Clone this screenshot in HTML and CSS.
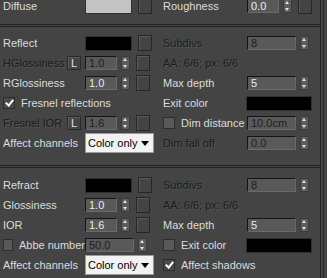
FILE: index.html
```html
<!DOCTYPE html>
<html lang="en">
<head>
    <meta charset="UTF-8">
    <title>VRayMtl - Basic parameters</title>
    <link rel="stylesheet" href="styles.css">
</head>
<body>
    <div class="frame">
        <div class="panel">
            <section class="sec sec-diffuse">
                <div class="row">
                    <span class="lbl">Diffuse</span>
                    <span class="ctl"><span class="swatch grey"></span><span class="map"></span></span>
                    <span class="lbl">Roughness</span>
                    <span class="ctl"><span class="field">0.0</span><span class="spin"></span><span class="map"></span></span>
                </div>
            </section>

            <div class="sep"></div>

            <section class="sec sec-reflect">
                <div class="row">
                    <span class="lbl">Reflect</span>
                    <span class="ctl"><span class="swatch"></span><span class="map"></span></span>
                    <span class="lbl dis">Subdivs</span>
                    <span class="ctl"><span class="field wide off">8</span><span class="spin"></span></span>
                </div>
                <div class="row">
                    <span class="lbl lock"><span class="dis">HGlossiness</span><span class="lbtn">L</span></span>
                    <span class="ctl"><span class="field off">1.0</span><span class="spin"></span><span class="map"></span></span>
                    <span class="lbl dis span2">AA: 6/6; px: 6/6</span>
                </div>
                <div class="row">
                    <span class="lbl">RGlossiness</span>
                    <span class="ctl"><span class="field">1.0</span><span class="spin"></span><span class="map"></span></span>
                    <span class="lbl">Max depth</span>
                    <span class="ctl"><span class="field wide">5</span><span class="spin"></span></span>
                </div>
                <div class="row">
                    <span class="lbl span2"><span class="check on"></span>Fresnel reflections</span>
                    <span class="lbl">Exit color</span>
                    <span class="ctl"><span class="swatch long"></span></span>
                </div>
                <div class="row">
                    <span class="lbl lock"><span class="dis">Fresnel IOR</span><span class="lbtn">L</span></span>
                    <span class="ctl"><span class="field off">1.6</span><span class="spin"></span><span class="map"></span></span>
                    <span class="lbl"><span class="check"></span>Dim distance</span>
                    <span class="ctl"><span class="field wide off">10.0cm</span><span class="spin"></span></span>
                </div>
                <div class="row">
                    <span class="lbl">Affect channels</span>
                    <span class="ctl"><span class="drop">Color only</span></span>
                    <span class="lbl dis">Dim fall off</span>
                    <span class="ctl"><span class="field wide off">0.0</span><span class="spin"></span></span>
                </div>
            </section>

            <div class="sep"></div>

            <section class="sec sec-refract">
                <div class="row">
                    <span class="lbl">Refract</span>
                    <span class="ctl"><span class="swatch"></span><span class="map"></span></span>
                    <span class="lbl dis">Subdivs</span>
                    <span class="ctl"><span class="field wide off">8</span><span class="spin"></span></span>
                </div>
                <div class="row">
                    <span class="lbl">Glossiness</span>
                    <span class="ctl"><span class="field">1.0</span><span class="spin"></span><span class="map"></span></span>
                    <span class="lbl dis span2">AA: 6/6; px: 6/6</span>
                </div>
                <div class="row">
                    <span class="lbl">IOR</span>
                    <span class="ctl"><span class="field">1.6</span><span class="spin"></span><span class="map"></span></span>
                    <span class="lbl">Max depth</span>
                    <span class="ctl"><span class="field wide">5</span><span class="spin"></span></span>
                </div>
                <div class="row">
                    <span class="lbl"><span class="check"></span>Abbe number</span>
                    <span class="ctl"><span class="field wide off">50.0</span><span class="spin"></span></span>
                    <span class="lbl"><span class="check"></span>Exit color</span>
                    <span class="ctl"><span class="swatch long"></span></span>
                </div>
                <div class="row">
                    <span class="lbl">Affect channels</span>
                    <span class="ctl"><span class="drop">Color only</span></span>
                    <span class="lbl span2"><span class="check on"></span>Affect shadows</span>
                </div>
            </section>
        </div>
        <div class="edge"></div>
    </div>
</body>
</html>
```

FILE: styles.css
```css
body {
    margin: 0;
    background: #444444;
    color: #dcdcdc;
    font-family: "Liberation Sans", Arial, sans-serif;
    font-size: 11px;
    overflow: hidden;
}

.frame {
    display: flex;
    height: 278px;
}

.panel {
    width: 320px;
    border-right: 1px solid #232323;
}

.edge {
    width: 1px;
    margin-left: 2px;
    background: #2a2a2a;
}

.sec-diffuse {
    margin-top: -4px;
    padding-bottom: 8px;
}

.sec-reflect {
    padding-top: 6px;
    padding-bottom: 12px;
}

.sec-refract {
    padding-top: 7px;
}

.sep {
    height: 3px;
    box-sizing: border-box;
    border-top: 1px solid #232323;
    border-bottom: 1px solid #232323;
}

.row {
    display: grid;
    grid-template-columns: 85px 75px 87px 1fr;
    height: 20px;
    align-items: center;
}

.lbl {
    display: flex;
    align-items: center;
    padding-left: 3px;
    white-space: nowrap;
}

.span2 {
    grid-column: span 2;
}

.lock {
    justify-content: space-between;
    padding-right: 4px;
}

.dis {
    color: #1c1c1c;
    text-shadow: 1px 1px 0 #555555;
}

.ctl {
    display: flex;
    align-items: center;
}

.lbtn {
    flex-shrink: 0;
    width: 12px;
    height: 12px;
    border: 1px solid #2a2a2a;
    box-shadow: inset 1px 1px 0 #5c5c5c;
    text-align: center;
    line-height: 12px;
    color: #e4e4e4;
    text-shadow: none;
}

.field {
    width: 32px;
    height: 14px;
    box-sizing: border-box;
    padding-left: 3px;
    line-height: 12px;
    background: #595959;
    border: 1px solid;
    border-color: #141414 #6a6a6a #6a6a6a #141414;
    color: #ececec;
}

.field.wide {
    width: 49px;
}

.field.off {
    color: #1e1e1e;
}

.spin {
    position: relative;
    width: 9px;
    height: 14px;
    margin-left: 4px;
    background: #5c5c5c;
    box-shadow: inset 0 0 0 1px #3a3a3a;
}

.spin::before,
.spin::after {
    content: "";
    position: absolute;
    left: 2px;
    border-left: 2.5px solid transparent;
    border-right: 2.5px solid transparent;
}

.spin::before {
    top: 2px;
    border-bottom: 3px solid #e2e2e2;
}

.spin::after {
    bottom: 2px;
    border-top: 3px solid #e2e2e2;
}

.map {
    width: 12px;
    height: 14px;
    margin-left: 6px;
    border: 1px solid #262626;
    box-shadow: inset 1px 1px 0 #5a5a5a;
}

.swatch {
    width: 47px;
    height: 15px;
    background: #000;
    border: 1px solid #303030;
    box-sizing: border-box;
}

.swatch.grey {
    background: #c3c3c3;
}

.swatch.long {
    width: 66px;
    margin-left: -1px;
}

.check {
    width: 12px;
    height: 12px;
    box-sizing: border-box;
    margin-right: 6px;
    background: #595959;
    border: 1px solid #2c2c2c;
    position: relative;
}

.check.on {
    background: #4a4a4a;
}

.check.on::after {
    content: "";
    position: absolute;
    left: 3px;
    top: 0;
    width: 3px;
    height: 6px;
    border-right: 2px solid #ffffff;
    border-bottom: 2px solid #ffffff;
    transform: rotate(40deg);
}

.drop {
    position: relative;
    width: 69px;
    height: 20px;
    box-sizing: border-box;
    padding-left: 2px;
    line-height: 19px;
    background: #f2f2f2;
    border: 1px solid #9a9a9a;
    color: #000;
    font-size: 11px;
}

.drop::after {
    content: "";
    position: absolute;
    right: 4px;
    top: 7px;
    border-left: 4px solid transparent;
    border-right: 4px solid transparent;
    border-top: 5px solid #000;
}
```
